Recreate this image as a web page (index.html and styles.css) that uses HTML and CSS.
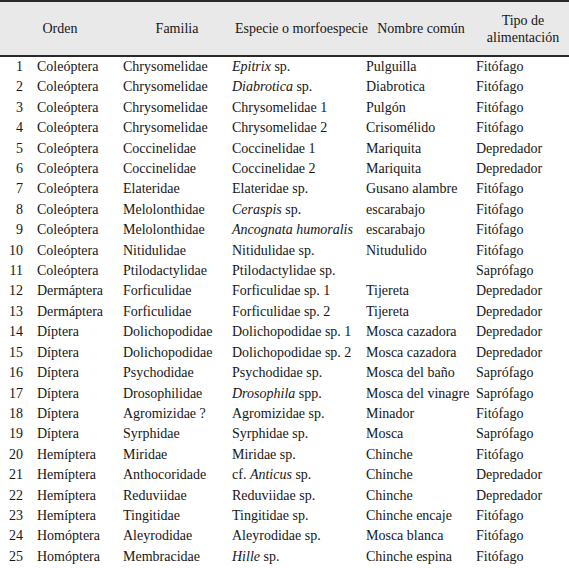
FILE: index.html
```html
<!DOCTYPE html>
<html lang="es">
<head>
<meta charset="utf-8">
<title>Tabla de insectos</title>
<link rel="stylesheet" href="styles.css">
</head>
<body>
<table class="tbl">
  <colgroup>
    <col class="c-num"><col class="c-orden"><col class="c-fam"><col class="c-esp"><col class="c-nom"><col class="c-tipo">
  </colgroup>
  <thead>
    <tr>
      <th class="h-num"></th>
      <th class="h-orden">Orden</th>
      <th class="h-fam">Familia</th>
      <th class="h-esp">Especie o morfoespecie</th>
      <th class="h-nom">Nombre común</th>
      <th class="h-tipo">Tipo de<br>alimentación</th>
    </tr>
  </thead>
  <tbody>
    <tr><td class="num">1</td><td>Coleóptera</td><td>Chrysomelidae</td><td><i>Epitrix</i> sp.</td><td>Pulguilla</td><td>Fitófago</td></tr>
    <tr><td class="num">2</td><td>Coleóptera</td><td>Chrysomelidae</td><td><i>Diabrotica</i> sp.</td><td>Diabrotica</td><td>Fitófago</td></tr>
    <tr><td class="num">3</td><td>Coleóptera</td><td>Chrysomelidae</td><td>Chrysomelidae 1</td><td>Pulgón</td><td>Fitófago</td></tr>
    <tr><td class="num">4</td><td>Coleóptera</td><td>Chrysomelidae</td><td>Chrysomelidae 2</td><td>Crisomélido</td><td>Fitófago</td></tr>
    <tr><td class="num">5</td><td>Coleóptera</td><td>Coccinelidae</td><td>Coccinelidae 1</td><td>Mariquita</td><td>Depredador</td></tr>
    <tr><td class="num">6</td><td>Coleóptera</td><td>Coccinelidae</td><td>Coccinelidae 2</td><td>Mariquita</td><td>Depredador</td></tr>
    <tr><td class="num">7</td><td>Coleóptera</td><td>Elateridae</td><td>Elateridae sp.</td><td>Gusano alambre</td><td>Fitófago</td></tr>
    <tr><td class="num">8</td><td>Coleóptera</td><td>Melolonthidae</td><td><i>Ceraspis</i> sp.</td><td>escarabajo</td><td>Fitófago</td></tr>
    <tr><td class="num">9</td><td>Coleóptera</td><td>Melolonthidae</td><td><i>Ancognata humoralis</i></td><td>escarabajo</td><td>Fitófago</td></tr>
    <tr><td class="num">10</td><td>Coleóptera</td><td>Nitidulidae</td><td>Nitidulidae sp.</td><td>Nitudulido</td><td>Fitófago</td></tr>
    <tr><td class="num">11</td><td>Coleóptera</td><td>Ptilodactylidae</td><td>Ptilodactylidae sp.</td><td></td><td>Saprófago</td></tr>
    <tr><td class="num">12</td><td>Dermáptera</td><td>Forficulidae</td><td>Forficulidae sp. 1</td><td>Tijereta</td><td>Depredador</td></tr>
    <tr><td class="num">13</td><td>Dermáptera</td><td>Forficulidae</td><td>Forficulidae sp. 2</td><td>Tijereta</td><td>Depredador</td></tr>
    <tr><td class="num">14</td><td>Díptera</td><td>Dolichopodidae</td><td>Dolichopodidae sp. 1</td><td>Mosca cazadora</td><td>Depredador</td></tr>
    <tr><td class="num">15</td><td>Díptera</td><td>Dolichopodidae</td><td>Dolichopodidae sp. 2</td><td>Mosca cazadora</td><td>Depredador</td></tr>
    <tr><td class="num">16</td><td>Díptera</td><td>Psychodidae</td><td>Psychodidae sp.</td><td>Mosca del baño</td><td>Saprófago</td></tr>
    <tr><td class="num">17</td><td>Díptera</td><td>Drosophilidae</td><td><i>Drosophila</i> spp.</td><td>Mosca del vinagre</td><td>Saprófago</td></tr>
    <tr><td class="num">18</td><td>Díptera</td><td>Agromizidae ?</td><td>Agromizidae sp.</td><td>Minador</td><td>Fitófago</td></tr>
    <tr><td class="num">19</td><td>Díptera</td><td>Syrphidae</td><td>Syrphidae sp.</td><td>Mosca</td><td>Saprófago</td></tr>
    <tr><td class="num">20</td><td>Hemíptera</td><td>Miridae</td><td>Miridae sp.</td><td>Chinche</td><td>Fitófago</td></tr>
    <tr><td class="num">21</td><td>Hemíptera</td><td>Anthocoridade</td><td>cf. <i>Anticus</i> sp.</td><td>Chinche</td><td>Depredador</td></tr>
    <tr><td class="num">22</td><td>Hemíptera</td><td>Reduviidae</td><td>Reduviidae sp.</td><td>Chinche</td><td>Depredador</td></tr>
    <tr><td class="num">23</td><td>Hemíptera</td><td>Tingitidae</td><td>Tingitidae sp.</td><td>Chinche encaje</td><td>Fitófago</td></tr>
    <tr><td class="num">24</td><td>Homóptera</td><td>Aleyrodidae</td><td>Aleyrodidae sp.</td><td>Mosca blanca</td><td>Fitófago</td></tr>
    <tr><td class="num">25</td><td>Homóptera</td><td>Membracidae</td><td><i>Hille</i> sp.</td><td>Chinche espina</td><td>Fitófago</td></tr>
  </tbody>
</table>
</body>
</html>
```

FILE: styles.css
```css
html, body {
  margin: 0;
  padding: 0;
  background: #ffffff;
}

.tbl {
  width: 569px;
  border-collapse: collapse;
  table-layout: fixed;
  font-family: "Liberation Serif", "Times New Roman", serif;
  font-size: 14px;
  color: #161616;
}

.c-num { width: 30px; }
.c-orden { width: 86px; }
.c-fam { width: 109px; }
.c-esp { width: 134px; }
.c-nom { width: 110px; }
.c-tipo { width: 100px; }

.tbl thead tr {
  background: #e9e9e9;
  border-top: 2px solid #2a2a2a;
  border-bottom: 2px solid #2a2a2a;
}

.tbl th {
  font-weight: normal;
  text-align: center;
  height: 53px;
  line-height: 17px;
  padding: 0;
  vertical-align: middle;
  white-space: nowrap;
}

.tbl th.h-orden { padding-right: 26px; }
.tbl th.h-fam { padding-left: 13px; }
.tbl th.h-esp { padding-left: 10px; }
.tbl th.h-nom { padding-left: 14px; }
.tbl th.h-tipo { padding-left: 8px; }

.tbl td {
  height: 20.4px;
  line-height: 20.4px;
  padding: 0 0 0 7px;
  white-space: nowrap;
  overflow: visible;
}

.tbl td.num {
  text-align: right;
  padding: 0 7px 0 0;
}
```
